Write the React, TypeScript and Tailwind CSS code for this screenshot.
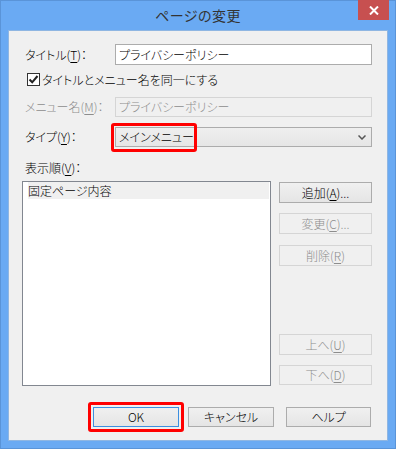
import React from "react";

const font = "font-['Noto_Sans_CJK_JP','Noto_Sans',sans-serif] [font-feature-settings:'palt']";

function Btn({ children, disabled, def, w = "w-[93px]", h = "h-[21px]" }: { children: React.ReactNode; disabled?: boolean; def?: boolean; w?: string; h?: string }) {
  return (
    <div
      className={`${w} ${h} flex items-center justify-center text-[12px] leading-none border ${
        disabled
          ? "border-[#d5d5d5] bg-[#f0f0f0] text-[#8d8d8d]"
          : def
          ? "border-[#3c8fe0] bg-gradient-to-b from-[#f0f0f0] to-[#e5e5e5] text-black"
          : "border-[#acacac] bg-gradient-to-b from-[#f0f0f0] to-[#e5e5e5] text-black"
      }`}
    >
      {children}
    </div>
  );
}

function U({ children }: { children: React.ReactNode }) {
  return <span className="underline underline-offset-[2px]">{children}</span>;
}

export default function App() {
  return (
    <div className={`w-[396px] h-[449px] bg-[#6aaaf3] border border-[#5a94d8] flex flex-col font-light ${font}`}>
      <div className="relative h-[29px] flex items-center justify-center">
        <span className="text-[14px] text-[#333333] tracking-[0.5px] font-normal">ページの変更</span>
        <div className="absolute top-[-1px] right-[6px] w-[31px] h-[20px] bg-[#c75050] flex items-center justify-center">
          <svg width="10" height="9" viewBox="0 0 10 9">
            <path d="M1 0.5 L9 8.5 M9 0.5 L1 8.5" stroke="white" strokeWidth="2" />
          </svg>
        </div>
      </div>
      <div className="mx-[7px] h-[411px] bg-[#f0f0f0] border border-[#8fb6e2] flex flex-col px-[13px] text-[12px] text-black">
        {/* title row */}
        <div className="mt-[13px] flex items-center h-[21px]">
          <div className="w-[93px] pl-[3px]">タイトル(<U>T</U>)：</div>
          <div className="w-[257px] h-[21px] bg-white border border-[#acacac] flex items-center pl-[3px]">プライバシーポリシー</div>
        </div>
        {/* checkbox row */}
        <div className="mt-[8px] flex items-center h-[13px] pl-[5px]">
          <div className="w-[13px] h-[13px] border border-[#333] bg-white flex items-center justify-center">
            <svg width="11" height="11" viewBox="0 0 11 11">
              <path d="M1.5 5.5 L4.2 8.3 L9.5 2" stroke="#222" strokeWidth="2" fill="none" />
            </svg>
          </div>
          <span className="ml-[2px]">タイトルとメニュー名を同一にする</span>
        </div>
        {/* menu name */}
        <div className="mt-[11px] flex items-center h-[20px]">
          <div className="w-[93px] pl-[3px] text-[#8d8d8d]">メニュー名(<U>M</U>)：</div>
          <div className="w-[257px] h-[20px] bg-[#f0f0f0] border border-[#d5d5d5] flex items-center pl-[3px] text-[#8d8d8d]">プライバシーポリシー</div>
        </div>
        {/* type */}
        <div className="mt-[10px] flex items-center h-[20px]">
          <div className="w-[93px] pl-[3px]">タイプ(<U>Y</U>)：</div>
          <div className="relative w-[257px] h-[20px] bg-gradient-to-b from-[#efefef] to-[#e6e6e6] border border-[#acacac] flex items-center pl-[3px]">
            <span>メインメニュー</span>
            <svg className="absolute right-[5px] top-[7px]" width="8" height="5" viewBox="0 0 8 5">
              <path d="M0.5 0.5 L4 4 L7.5 0.5" stroke="#555" strokeWidth="1.5" fill="none" />
            </svg>
            <div className="absolute left-[-5px] top-[-5px] w-[86px] h-[29px] border-[3px] border-[#ff0000] rounded-[3px]" />
          </div>
        </div>
        {/* display order label */}
        <div className="mt-[13px] h-[15px] pl-[3px] flex items-center">表示順(<U>V</U>)：</div>
        {/* list + buttons */}
        <div className="mt-[6px] flex">
          <div className="w-[249px] h-[205px] bg-white border border-[#828790] pl-[5px] pr-[1px]">
            <div className="h-[17px] bg-[#f0f0f0] flex items-center">固定ページ内容</div>
          </div>
          <div className="ml-[8px] pt-[1px] flex flex-col">
            <Btn>追加(<U>A</U>)...</Btn>
            <div className="mt-[10px]"><Btn disabled>変更(<U>C</U>)...</Btn></div>
            <div className="mt-[11px]"><Btn disabled>削除(<U>R</U>)</Btn></div>
            <div className="mt-[68px]"><Btn disabled>上へ(<U>U</U>)</Btn></div>
            <div className="mt-[10px]"><Btn disabled h="h-[20px]">下へ(<U>D</U>)</Btn></div>
          </div>
        </div>
        {/* bottom buttons */}
        <div className="mt-[21px] flex pl-[71px]">
          <div className="relative">
            <Btn def w="w-[86px]" h="h-[20px]">OK</Btn>
            <div className="absolute left-[-5px] top-[-5px] w-[96px] h-[30px] border-[3px] border-[#ff0000] rounded-[3px]" />
          </div>
          <div className="ml-[9px]"><Btn w="w-[86px]" h="h-[20px]">キャンセル</Btn></div>
          <div className="ml-[12px]"><Btn w="w-[85px]" h="h-[20px]">ヘルプ</Btn></div>
        </div>
      </div>
    </div>
  );
}
